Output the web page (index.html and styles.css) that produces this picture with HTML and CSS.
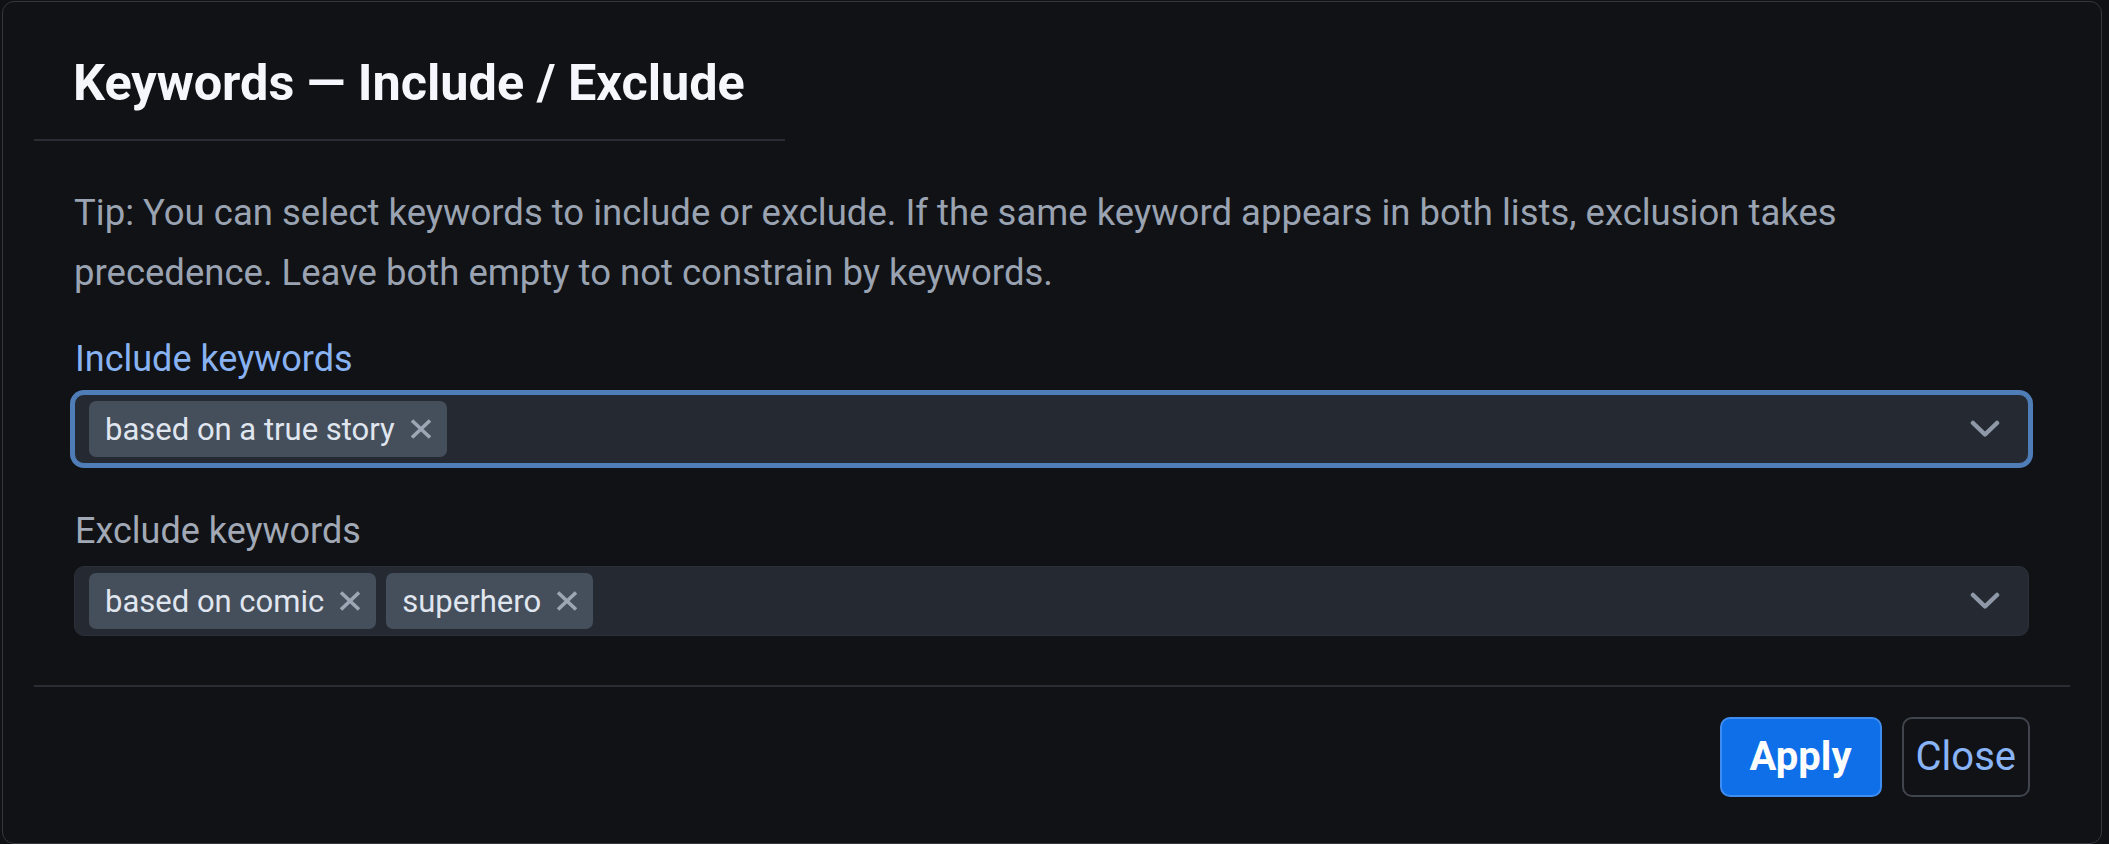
FILE: index.html
```html
<!DOCTYPE html>
<html lang="en">
<head>
<meta charset="utf-8">
<title>Keywords — Include / Exclude</title>
<link rel="stylesheet" href="styles.css">
</head>
<body>
<div class="dialog">
  <div class="dialog-header">
    <h2 class="dialog-title">Keywords — Include / Exclude</h2>
  </div>
  <div class="dialog-body">
    <p class="tip">Tip: You can select keywords to include or exclude. If the same keyword appears in both lists, exclusion takes precedence. Leave both empty to not constrain by keywords.</p>

    <label class="field-label field-label-active">Include keywords</label>
    <div class="field field-focused">
      <div class="chips">
        <span class="chip">based on a true story<svg class="chip-x" viewBox="0 0 22 20" width="22" height="20"><path d="M2 1.5 L20 18.5 M20 1.5 L2 18.5"/></svg></span>
      </div>
      <svg class="chevron" viewBox="0 0 30 18" width="30" height="18"><polyline points="3,3 15,14.5 27,3"/></svg>
    </div>

    <label class="field-label field-label-2">Exclude keywords</label>
    <div class="field">
      <div class="chips">
        <span class="chip">based on comic<svg class="chip-x" viewBox="0 0 22 20" width="22" height="20"><path d="M2 1.5 L20 18.5 M20 1.5 L2 18.5"/></svg></span>
        <span class="chip">superhero<svg class="chip-x" viewBox="0 0 22 20" width="22" height="20"><path d="M2 1.5 L20 18.5 M20 1.5 L2 18.5"/></svg></span>
      </div>
      <svg class="chevron" viewBox="0 0 30 18" width="30" height="18"><polyline points="3,3 15,14.5 27,3"/></svg>
    </div>
  </div>
  <div class="dialog-footer">
    <button class="btn btn-primary" type="button">Apply</button>
    <button class="btn btn-outline" type="button">Close</button>
  </div>
</div>
</body>
</html>
```

FILE: styles.css
```css
* {
  box-sizing: border-box;
}

html, body {
  margin: 0;
  padding: 0;
  background: #101114;
}

body {
  font-family: Roboto, "Liberation Sans", Arial, sans-serif;
  color: #e6e9ef;
}

.dialog {
  width: 2100px;
  margin: 1px 0 0 2px;
  background: #111215;
  border: 1px solid #34373d;
  border-radius: 12px;
  padding: 0 31px;
}

.dialog-header {
  width: fit-content;
  padding: 50px 40px 26px 39px;
  border-bottom: 2px solid #2a2d33;
}

.dialog-title {
  margin: 0;
  font-size: 50.4px;
  line-height: 61px;
  font-weight: 700;
  color: #f5f7fc;
}

.dialog-body {
  padding: 42px 41px 49px 40px;
}

.tip {
  margin: 0;
  font-size: 36.5px;
  line-height: 60px;
  color: #9aa3b2;
}

.field-label {
  display: block;
  margin: 29px 0 8px;
  padding-left: 1px;
  font-size: 36px;
  line-height: 54px;
  color: #a1a9b6;
}

.field-label-2 {
  margin-top: 40px;
  margin-bottom: 8px;
}

.field-label-active {
  color: #88b2f2;
}

.field {
  display: flex;
  align-items: center;
  height: 70px;
  padding: 0 28px 0 14px;
  background: #252a32;
  border: 1px solid #2a2f38;
  border-radius: 10px;
}

.field-focused {
  border-color: #4f7db8;
  box-shadow: 0 0 0 4px #4f7db8;
}

.chips {
  flex: 1;
  display: flex;
  gap: 10px;
  align-items: center;
}

.chip {
  display: inline-flex;
  align-items: center;
  gap: 15px;
  height: 56px;
  padding: 0 15px 0 16px;
  background: #454e5b;
  border-radius: 7px;
  font-size: 31px;
  color: #e0e6ef;
}

.chip-x {
  display: block;
  fill: none;
  stroke: #9ca6b4;
  stroke-width: 3.6;
}

.chevron {
  display: block;
  fill: none;
  stroke: #8e98a7;
  stroke-width: 4.5;
  stroke-linecap: round;
  stroke-linejoin: round;
}

.dialog-footer {
  display: flex;
  justify-content: flex-end;
  gap: 20px;
  padding: 30px 40px 46px;
  border-top: 2px solid #2a2d33;
}

.btn {
  height: 80px;
  border-radius: 10px;
  font-family: Roboto, "Liberation Sans", Arial, sans-serif;
  font-size: 40px;
  line-height: 1;
  cursor: pointer;
}

.btn-primary {
  padding: 0 28px;
  background: #0e6fe8;
  border: 2px solid #3f8df0;
  color: #ffffff;
  font-weight: 700;
}

.btn-outline {
  padding: 0 12px;
  background: transparent;
  border: 2px solid #3f444d;
  color: #8ab4f8;
  font-weight: 400;
}
```
